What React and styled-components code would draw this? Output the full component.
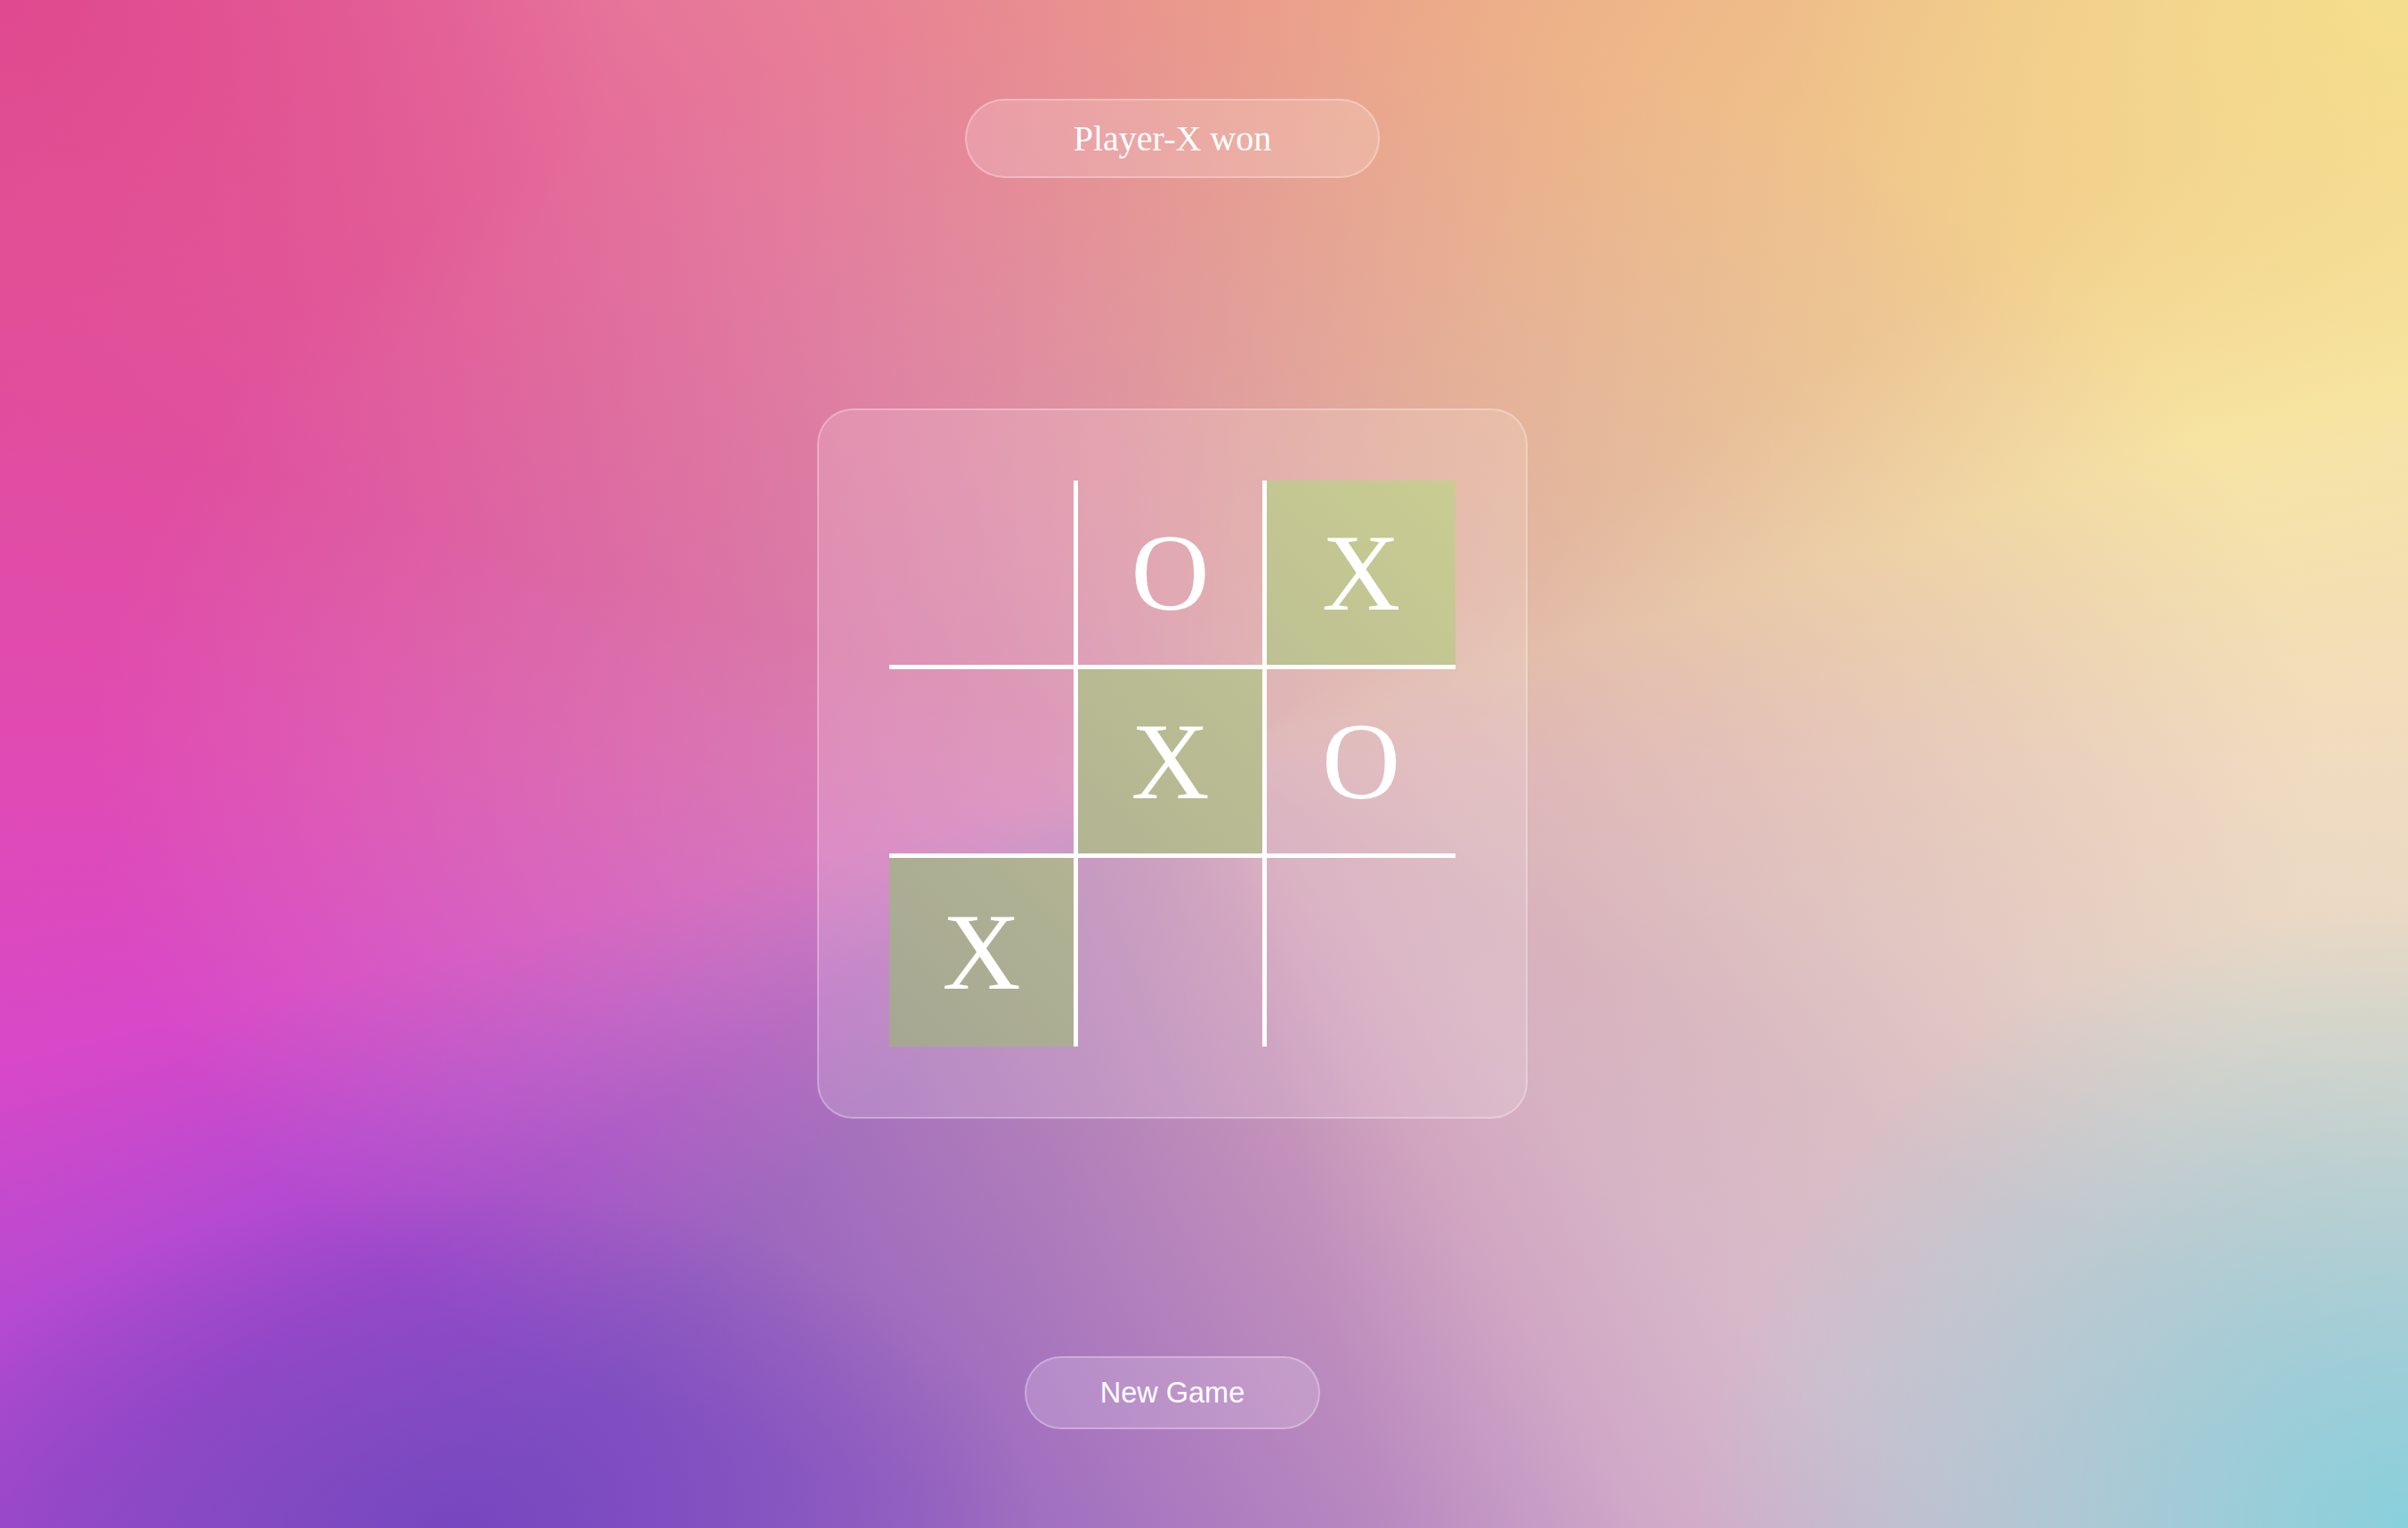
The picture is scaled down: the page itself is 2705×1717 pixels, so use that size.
import styled, { createGlobalStyle } from "styled-components";

const GlobalStyle = createGlobalStyle`
  html, body {
    margin: 0;
    padding: 0;
    height: 100%;
  }
  body {
    font-family: "Liberation Serif", "Times New Roman", serif;
  }
`;

const board = ["", "O", "X", "", "X", "O", "X", "", ""];
const winLine = [2, 4, 6];

const App = () => {
  return (
    <Page>
      <GlobalStyle />
      <Status>Player-X won</Status>
      <Card>
        <Board>
          {board.map((value, i) => {
            const row = Math.floor(i / 3);
            const col = i % 3;
            return (
              <Cell key={i} $row={row} $col={col} $win={winLine.includes(i)}>
                {value}
              </Cell>
            );
          })}
        </Board>
      </Card>
      <NewGame>New Game</NewGame>
    </Page>
  );
};

export default App;

const Page = styled.div`
  min-height: 100vh;
  box-sizing: border-box;
  padding: 111px 71px 0 0;
  display: flex;
  flex-direction: column;
  align-items: center;
  background-color: #d8a0b0;
  background-image:
    radial-gradient(ellipse 800px 700px at 100% 100%, rgba(136, 208, 220, 1) 0%, rgba(136, 208, 220, 0) 100%),
    radial-gradient(ellipse 650px 380px at 19% 100%, rgba(118, 70, 192, 0.95) 0%, rgba(118, 70, 192, 0) 100%),
    radial-gradient(ellipse 700px 520px at 0% 0%, rgba(224, 70, 142, 0.9) 0%, rgba(224, 70, 142, 0) 100%),
    radial-gradient(ellipse 700px 500px at 100% 0%, rgba(245, 224, 140, 0.9) 0%, rgba(245, 224, 140, 0) 100%),
    radial-gradient(ellipse 1250px 850px at 50% 50%, rgba(212, 160, 178, 0.85) 0%, rgba(212, 160, 178, 0) 100%),
    conic-gradient(
      from 0deg at 50% 50%,
      #ea9a8c 0deg,
      #eeb888 32deg,
      #f1cc8e 57deg,
      #f7e4a2 72deg,
      #f0dcc0 90deg,
      #e6d6c8 104deg,
      #dcc6ca 118deg,
      #d8bccc 135deg,
      #d0a8c8 150deg,
      #b888c0 167deg,
      #9a68c0 200deg,
      #8c56c2 224deg,
      #a248cc 238deg,
      #b84ad0 246deg,
      #d848c8 256deg,
      #e04ab4 270deg,
      #e04e9e 287deg,
      #e25e98 302deg,
      #e6749a 322deg,
      #ea9a8c 360deg
    );
`;

const Status = styled.div`
  box-sizing: border-box;
  height: 89px;
  padding: 0 120px;
  display: flex;
  align-items: center;
  justify-content: center;
  border-radius: 45px;
  border: 2px solid rgba(255, 255, 255, 0.28);
  background: rgba(255, 255, 255, 0.17);
  color: #fff;
  font-family: "Liberation Serif", "Times New Roman", serif;
  font-size: 40px;
  white-space: nowrap;
`;

const Card = styled.div`
  margin-top: 259px;
  padding: 79px;
  border-radius: 40px;
  border: 2px solid rgba(255, 255, 255, 0.28);
  background: rgba(255, 255, 255, 0.15);
`;

const Board = styled.div`
  display: grid;
  grid-template-columns: repeat(3, 212px);
  grid-template-rows: repeat(3, 212px);
`;

const Cell = styled.div`
  box-sizing: border-box;
  display: flex;
  align-items: center;
  justify-content: center;
  border-right: ${(p) => (p.$col < 2 ? "5px solid #fff" : "none")};
  border-bottom: ${(p) => (p.$row < 2 ? "5px solid #fff" : "none")};
  background-image: ${(p) =>
    p.$win ? "linear-gradient(45deg, #a6a793 0%, #c9cd92 100%)" : "none"};
  background-size: 636px 636px;
  background-position: ${(p) => `${-p.$col * 212}px ${-p.$row * 212}px`};
  color: #fff;
  font-family: "Liberation Serif", "Times New Roman", serif;
  font-size: 122px;
  line-height: 1;
`;

const NewGame = styled.button`
  margin-top: 267px;
  box-sizing: border-box;
  height: 82px;
  padding: 0 83px;
  border-radius: 41px;
  border: 2px solid rgba(255, 255, 255, 0.28);
  background: rgba(255, 255, 255, 0.17);
  color: #fff;
  font-family: "Liberation Sans", Arial, sans-serif;
  font-size: 32.5px;
  cursor: pointer;
`;
